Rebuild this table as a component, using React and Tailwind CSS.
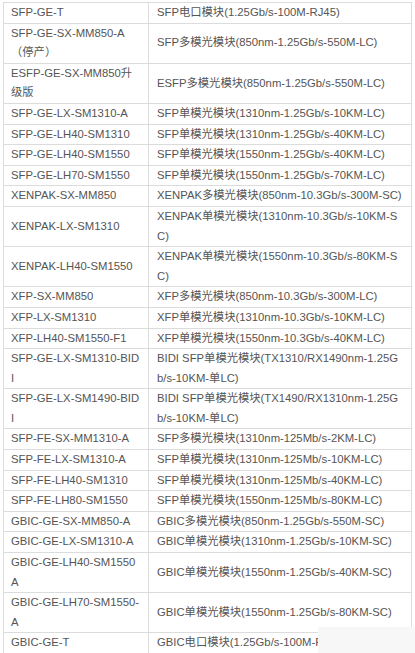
const rows = [
  [["SFP-GE-T"], ["SFP电口模块(1.25Gb/s-100M-RJ45)"]],
  [["SFP-GE-SX-MM850-A", "（停产）"], ["SFP多模光模块(850nm-1.25Gb/s-550M-LC)"]],
  [["ESFP-GE-SX-MM850升", "级版"], ["ESFP多模光模块(850nm-1.25Gb/s-550M-LC)"]],
  [["SFP-GE-LX-SM1310-A"], ["SFP单模光模块(1310nm-1.25Gb/s-10KM-LC)"]],
  [["SFP-GE-LH40-SM1310"], ["SFP单模光模块(1310nm-1.25Gb/s-40KM-LC)"]],
  [["SFP-GE-LH40-SM1550"], ["SFP单模光模块(1550nm-1.25Gb/s-40KM-LC)"]],
  [["SFP-GE-LH70-SM1550"], ["SFP单模光模块(1550nm-1.25Gb/s-70KM-LC)"]],
  [["XENPAK-SX-MM850"], ["XENPAK多模光模块(850nm-10.3Gb/s-300M-SC)"]],
  [["XENPAK-LX-SM1310"], ["XENPAK单模光模块(1310nm-10.3Gb/s-10KM-S", "C)"]],
  [["XENPAK-LH40-SM1550"], ["XENPAK单模光模块(1550nm-10.3Gb/s-80KM-S", "C)"]],
  [["XFP-SX-MM850"], ["XFP多模光模块(850nm-10.3Gb/s-300M-LC)"]],
  [["XFP-LX-SM1310"], ["XFP单模光模块(1310nm-10.3Gb/s-10KM-LC)"]],
  [["XFP-LH40-SM1550-F1"], ["XFP单模光模块(1550nm-10.3Gb/s-40KM-LC)"]],
  [["SFP-GE-LX-SM1310-BID", "I"], ["BIDI SFP单模光模块(TX1310/RX1490nm-1.25G", "b/s-10KM-单LC)"]],
  [["SFP-GE-LX-SM1490-BID", "I"], ["BIDI SFP单模光模块(TX1490/RX1310nm-1.25G", "b/s-10KM-单LC)"]],
  [["SFP-FE-SX-MM1310-A"], ["SFP多模光模块(1310nm-125Mb/s-2KM-LC)"]],
  [["SFP-FE-LX-SM1310-A"], ["SFP单模光模块(1310nm-125Mb/s-10KM-LC)"]],
  [["SFP-FE-LH40-SM1310"], ["SFP单模光模块(1310nm-125Mb/s-40KM-LC)"]],
  [["SFP-FE-LH80-SM1550"], ["SFP单模光模块(1550nm-125Mb/s-80KM-LC)"]],
  [["GBIC-GE-SX-MM850-A"], ["GBIC多模光模块(850nm-1.25Gb/s-550M-SC)"]],
  [["GBIC-GE-LX-SM1310-A"], ["GBIC单模光模块(1310nm-1.25Gb/s-10KM-SC)"]],
  [["GBIC-GE-LH40-SM1550", "A"], ["GBIC单模光模块(1550nm-1.25Gb/s-40KM-SC)"]],
  [["GBIC-GE-LH70-SM1550-", "A"], ["GBIC单模光模块(1550nm-1.25Gb/s-80KM-SC)"]],
  [["GBIC-GE-T"], ["GBIC电口模块(1.25Gb/s-100M-RJ45)"]],
];

function Lines({ lines }) {
  return lines.map((l, i) => (
    <div key={i} className="whitespace-nowrap">
      {l}
    </div>
  ));
}

export default function App() {
  return (
    <div
      className="relative w-[415px] h-[653px] overflow-hidden bg-white pt-[2px] pl-[3px]"
      style={{ fontFamily: '"Liberation Sans", "Noto Sans CJK SC", sans-serif' }}
    >
      <table className="w-[409px] border-collapse table-fixed text-[11.3px] leading-[19.6px] text-[#555]">
        <colgroup>
          <col className="w-[145px]" />
          <col />
        </colgroup>
        <tbody>
          {rows.map(([a, b], i) => (
            <tr key={i}>
              <td
                className={`border border-[#dcdcdc] pl-[7px] py-0 align-middle overflow-hidden ${
                  i === rows.length - 1 ? "border-b-2 border-b-[#c8c8c8]" : ""
                }`}
              >
                <Lines lines={a} />
              </td>
              <td
                className={`border border-[#dcdcdc] pl-[8px] py-0 align-middle overflow-hidden ${
                  i === rows.length - 1 ? "border-b-2 border-b-[#c8c8c8]" : ""
                }`}
              >
                <Lines lines={b} />
              </td>
            </tr>
          ))}
        </tbody>
      </table>

      {/* watermark patch over the bottom right corner */}
      <div className="absolute left-[318px] top-[627px] w-[97px] h-[26px] bg-[#f7f7f7]" />
    </div>
  );
}
